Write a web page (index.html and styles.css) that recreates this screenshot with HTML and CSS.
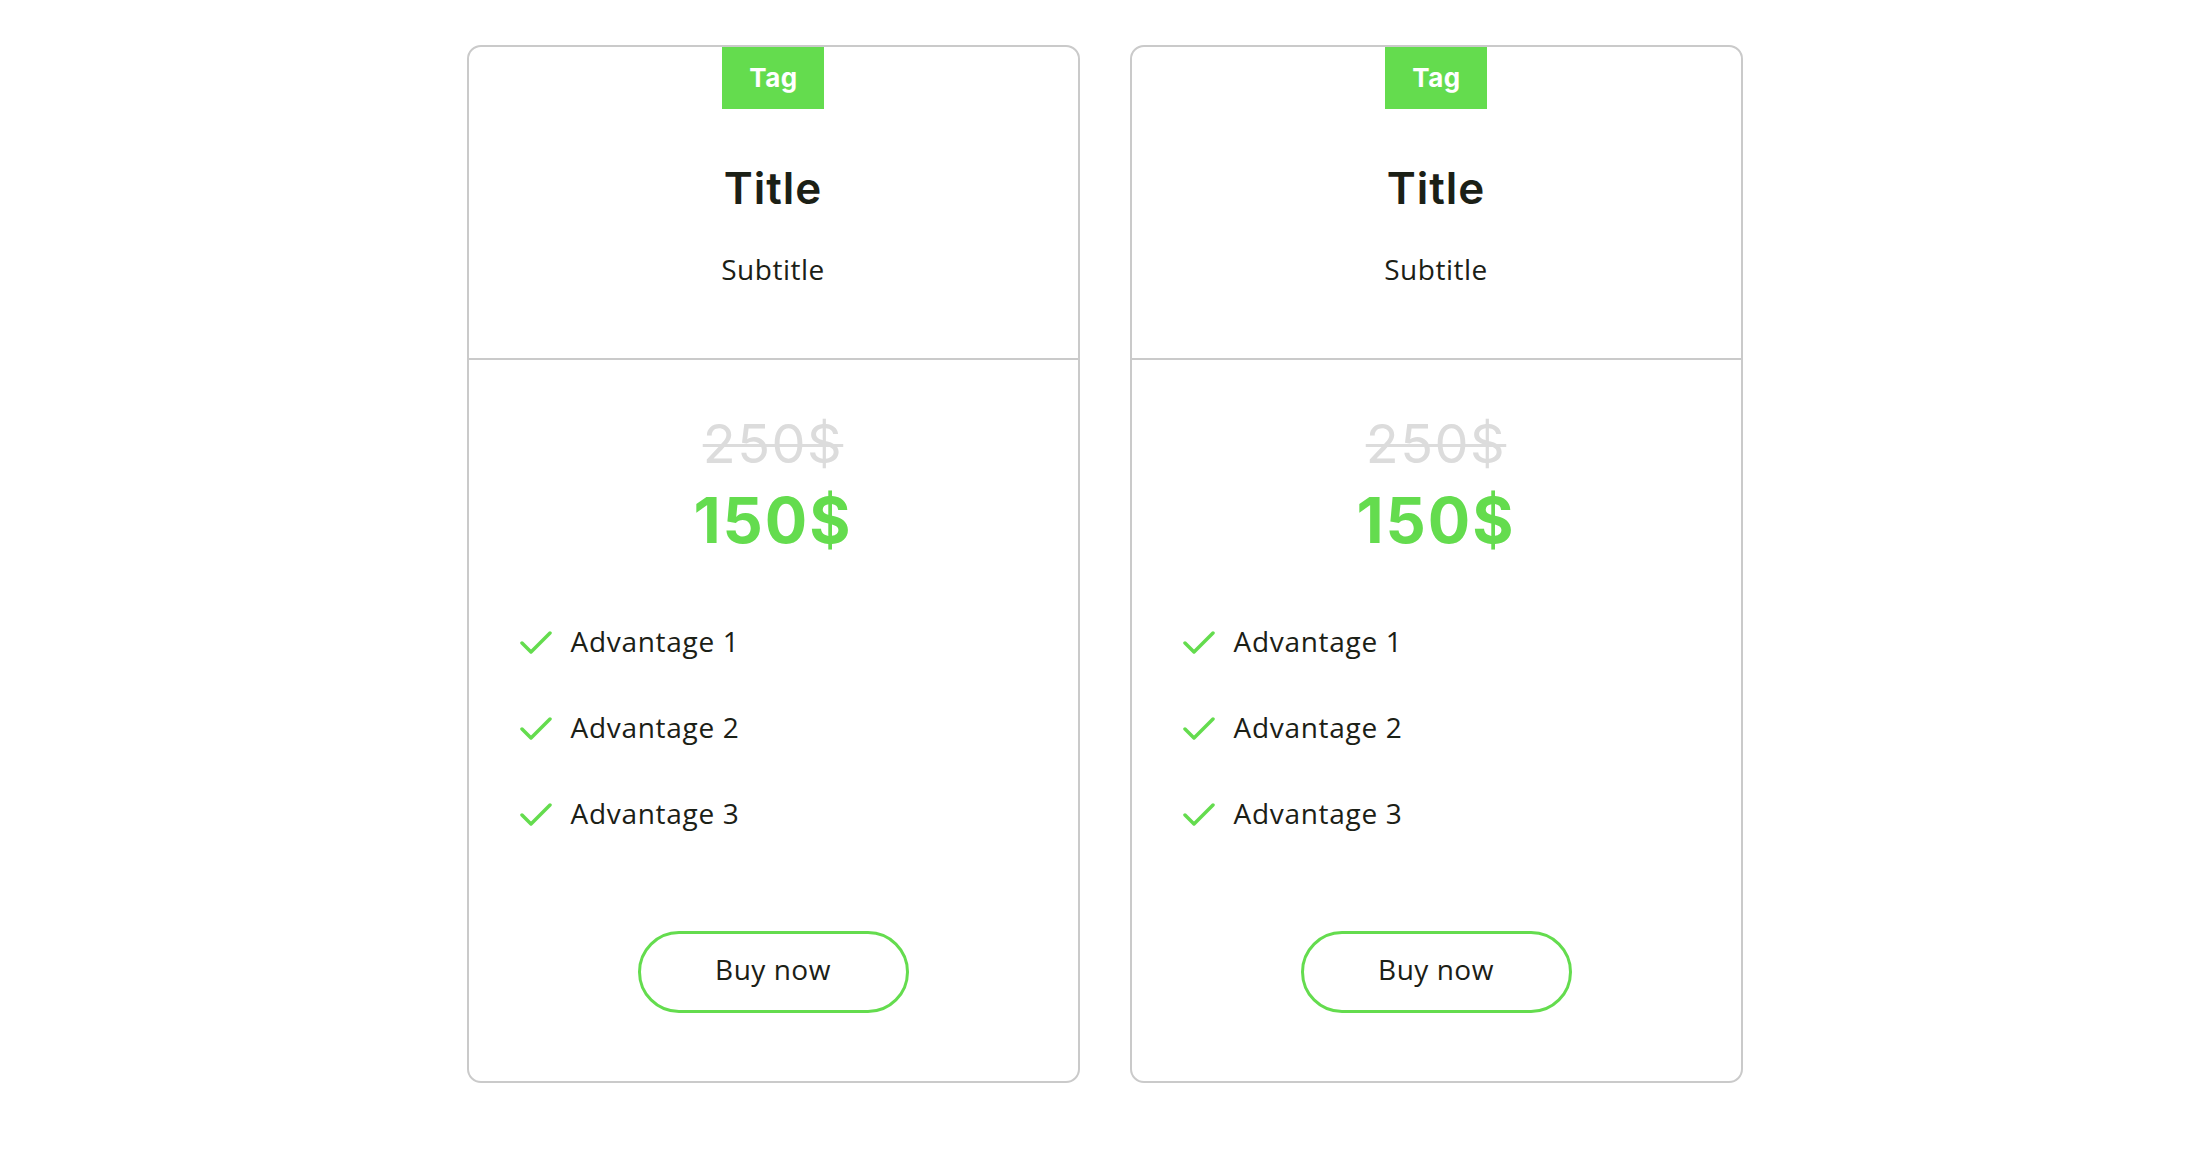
FILE: index.html
```html
<!DOCTYPE html>
<html lang="en">
<head>
  <meta charset="UTF-8" />
  <title>Pricing</title>
  <meta name="viewport" content="width=device-width, initial-scale=1" />
  <link rel="stylesheet" href="styles.css">
</head>
<body>
  <main class="plans">
    <div class="card">
      <div class="card-head">
        <span class="tag">Tag</span>
        <h2 class="title">Title</h2>
        <p class="subtitle">Subtitle</p>
      </div>
      <div class="card-body">
        <div class="old-price">250$</div>
        <div class="price">150$</div>
        <ul class="advantages">
          <li><svg class="check" width="32" height="24" viewBox="0 0 32 24"><polyline points="2,12 11,21 30,2" /></svg>Advantage 1</li>
          <li><svg class="check" width="32" height="24" viewBox="0 0 32 24"><polyline points="2,12 11,21 30,2" /></svg>Advantage 2</li>
          <li><svg class="check" width="32" height="24" viewBox="0 0 32 24"><polyline points="2,12 11,21 30,2" /></svg>Advantage 3</li>
        </ul>
        <a href="#" class="btn-buy">Buy now</a>
      </div>
    </div>

    <div class="card">
      <div class="card-head">
        <span class="tag">Tag</span>
        <h2 class="title">Title</h2>
        <p class="subtitle">Subtitle</p>
      </div>
      <div class="card-body">
        <div class="old-price">250$</div>
        <div class="price">150$</div>
        <ul class="advantages">
          <li><svg class="check" width="32" height="24" viewBox="0 0 32 24"><polyline points="2,12 11,21 30,2" /></svg>Advantage 1</li>
          <li><svg class="check" width="32" height="24" viewBox="0 0 32 24"><polyline points="2,12 11,21 30,2" /></svg>Advantage 2</li>
          <li><svg class="check" width="32" height="24" viewBox="0 0 32 24"><polyline points="2,12 11,21 30,2" /></svg>Advantage 3</li>
        </ul>
        <a href="#" class="btn-buy">Buy now</a>
      </div>
    </div>
  </main>
</body>
</html>
```

FILE: styles.css
```css
body {
  margin: 0;
  font-family: 'Open Sans', sans-serif;
  background: #fff;
  color: #1b2016;
}
.plans {
  display: flex;
  justify-content: center;
  gap: 50px;
  padding: 45px 0 0 7px;
}
.card {
  width: 609px;
  border: 2px solid #cacaca;
  border-radius: 14px;
  display: flex;
  flex-direction: column;
}
.card-head {
  display: flex;
  flex-direction: column;
  align-items: center;
  text-align: center;
  padding-bottom: 69px;
  border-bottom: 2px solid #cacaca;
}
.tag {
  background: #64dc4e;
  color: #fff;
  font-family: 'Inter', sans-serif;
  font-weight: 700;
  font-size: 26px;
  height: 62px;
  line-height: 62px;
  padding: 0 26px 0 27px;
  letter-spacing: 0.5px;
}
.title {
  margin: 52px 0 0;
  font-family: 'Inter', sans-serif;
  font-weight: 600;
  font-size: 44px;
  line-height: 54px;
  letter-spacing: 1px;
}
.subtitle {
  margin: 34px 0 0;
  font-size: 28px;
  line-height: 40px;
  letter-spacing: 0.5px;
}
.card-body {
  display: flex;
  flex-direction: column;
  align-items: center;
  padding: 52px 0 68px;
}
.old-price {
  font-family: 'Inter', sans-serif;
  font-size: 54px;
  line-height: 64px;
  color: #dcdcdc;
  letter-spacing: 1.5px;
  text-decoration: line-through;
  text-decoration-thickness: 3px;
}
.price {
  margin-top: 9px;
  font-family: 'Inter', sans-serif;
  font-weight: 700;
  font-size: 63px;
  line-height: 70px;
  letter-spacing: 2px;
  color: #64dc4e;
}
.advantages {
  list-style: none;
  align-self: stretch;
  margin: 66px 0 0;
  padding: 0 0 0 51px;
  display: flex;
  flex-direction: column;
  gap: 46px;
}
.advantages li {
  display: flex;
  align-items: flex-start;
  gap: 19px;
  font-size: 28px;
  line-height: 40px;
  letter-spacing: 0.7px;
}
.check {
  margin-top: 10px;
  flex-shrink: 0;
}
.check polyline {
  fill: none;
  stroke: #64dc4e;
  stroke-width: 3.5;
  stroke-linecap: round;
  stroke-linejoin: round;
}
.btn-buy {
  margin-top: 98px;
  box-sizing: border-box;
  width: 271px;
  height: 82px;
  border: 3px solid #64dc4e;
  border-radius: 41px;
  display: flex;
  justify-content: center;
  padding-bottom: 6px;
  font-size: 28px;
  line-height: 70px;
  letter-spacing: 0.5px;
  color: #1b2016;
  text-decoration: none;
}
```
